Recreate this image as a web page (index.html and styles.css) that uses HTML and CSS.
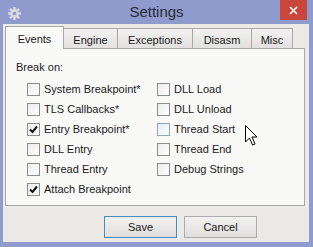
FILE: index.html
```html
<!DOCTYPE html>
<html>
<head>
<meta charset="utf-8">
<link rel="stylesheet" href="styles.css">
</head>
<body>
<div class="window">
  <div class="titlebar">
    <svg class="gear" width="13" height="13" viewBox="0 0 13 13">
      <g fill="#d7d8e3" transform="translate(6.5 6.5)">
        <circle r="4.4"/>
        <rect x="-1.2" y="-6.5" width="2.4" height="13"/>
        <rect x="-1.2" y="-6.5" width="2.4" height="13" transform="rotate(45)"/>
        <rect x="-1.2" y="-6.5" width="2.4" height="13" transform="rotate(90)"/>
        <rect x="-1.2" y="-6.5" width="2.4" height="13" transform="rotate(135)"/>
      </g>
      <circle cx="6.5" cy="6.5" r="1.8" fill="#8e9bcc"/>
    </svg>
    <div class="title">Settings</div>
    <div class="close">
      <svg width="9" height="9" viewBox="0 0 9 9"><path d="M1 1 L8 8 M8 1 L1 8" stroke="#fff" stroke-width="1.6"/></svg>
    </div>
  </div>
  <div class="client">
    <div class="tabs">
      <div class="tab active t-events">Events</div>
      <div class="tab t-engine">Engine</div>
      <div class="tab t-exc">Exceptions</div>
      <div class="tab t-disasm">Disasm</div>
      <div class="tab t-misc">Misc</div>
    </div>
    <div class="panel">
      <div class="label">Break on:</div>
      <div class="grid">
        <div class="check"><span class="box"></span>System Breakpoint*</div>
        <div class="check"><span class="box"></span>TLS Callbacks*</div>
        <div class="check"><span class="box"><svg width="11" height="11" viewBox="0 0 11 11"><path d="M2 5.5 L4.5 8 L9 2.5" fill="none" stroke="#111" stroke-width="2"/></svg></span>Entry Breakpoint*</div>
        <div class="check"><span class="box"></span>DLL Entry</div>
        <div class="check"><span class="box"></span>Thread Entry</div>
        <div class="check"><span class="box"><svg width="11" height="11" viewBox="0 0 11 11"><path d="M2 5.5 L4.5 8 L9 2.5" fill="none" stroke="#111" stroke-width="2"/></svg></span>Attach Breakpoint</div>
        <div class="check"><span class="box"></span>DLL Load</div>
        <div class="check"><span class="box"></span>DLL Unload</div>
        <div class="check"><span class="box hover"></span>Thread Start</div>
        <div class="check"><span class="box"></span>Thread End</div>
        <div class="check"><span class="box"></span>Debug Strings</div>
      </div>
    </div>
    <div class="buttons">
      <div class="btn default">Save</div>
      <div class="btn">Cancel</div>
    </div>
  </div>
  <svg class="cursor" width="14" height="22" viewBox="0 0 14 22">
    <path d="M0.5 0.5 L0.5 17 L4.5 13 L7.5 20 L10 19 L7 12 L12 12 Z" fill="#fff" stroke="#000" stroke-width="1" stroke-linejoin="miter"/>
  </svg>
</div>
</body>
</html>
```

FILE: styles.css
```css
body {
  margin: 0;
  width: 313px;
  height: 247px;
  overflow: hidden;
  background: #8e9bcc;
  font-family: "Liberation Sans", Arial, sans-serif;
  color: #1a1a1a;
}
.window {
  position: relative;
  width: 313px;
  height: 247px;
  display: flex;
  flex-direction: column;
}
.titlebar {
  height: 24px;
  display: grid;
  grid-template-columns: 1fr auto 1fr;
}
.gear {
  margin: 7px 0 0 8px;
}
.title {
  font-size: 15px;
  line-height: 20px;
  padding-top: 2px;
  color: #2a2b38;
}
.close {
  justify-self: end;
  margin-right: 6px;
  width: 27px;
  height: 20px;
  background: #c8463c;
  display: flex;
  align-items: center;
  justify-content: center;
}
.client {
  margin: 0 4px 0 3px;
  height: 218px;
  box-sizing: border-box;
  background: #ebeae7;
  padding: 2px 0 0 2px;
}
.tabs {
  display: flex;
  align-items: flex-end;
  height: 22px;
}
.tab {
  box-sizing: border-box;
  height: 20px;
  border: 1px solid #a8a8a8;
  border-bottom: none;
  background: linear-gradient(#f2f2f1, #e2e1df);
  font-size: 11px;
  line-height: 13px;
  padding-top: 5px;
  text-align: center;
  margin-left: -1px;
}
.tab.active {
  height: 23px;
  margin-bottom: -1px;
  margin-left: 0;
  padding-top: 6px;
  background: #f9f9f8;
  position: relative;
  z-index: 1;
}
.t-events { width: 59px; }
.t-engine { width: 55px; }
.t-exc { width: 76px; }
.t-disasm { width: 60px; }
.t-misc { width: 42px; }
.panel {
  box-sizing: border-box;
  width: 300px;
  height: 158px;
  border: 1px solid #a8a8a8;
  background: #f9f9f8;
  padding: 12px 0 0 10px;
}
.label {
  font-size: 11px;
  line-height: 13px;
}
.grid {
  margin: 5px 0 0 11px;
  display: grid;
  grid-template-columns: 130px auto;
  grid-template-rows: repeat(6, 20px);
  grid-auto-flow: column;
}
.check {
  display: flex;
  align-items: center;
  font-size: 11px;
  line-height: 20px;
}
.box {
  box-sizing: border-box;
  width: 13px;
  height: 13px;
  border: 1px solid #8c8c8c;
  background: linear-gradient(135deg, #ececec, #ffffff);
  margin-right: 4px;
  display: flex;
}
.box.hover {
  border-color: #8fa3ba;
  background: linear-gradient(135deg, #e6eef5, #fbfcfd);
}
.buttons {
  display: flex;
  gap: 7px;
  margin-top: 10px;
  padding-left: 99px;
}
.btn {
  box-sizing: border-box;
  width: 73px;
  height: 22px;
  border: 1px solid #acacac;
  background: linear-gradient(#f1f1f0, #e0dfdd);
  font-size: 11px;
  line-height: 20px;
  text-align: center;
}
.btn.default {
  border-color: #4a8cc2;
}
.cursor {
  position: absolute;
  left: 245px;
  top: 125px;
}
```
